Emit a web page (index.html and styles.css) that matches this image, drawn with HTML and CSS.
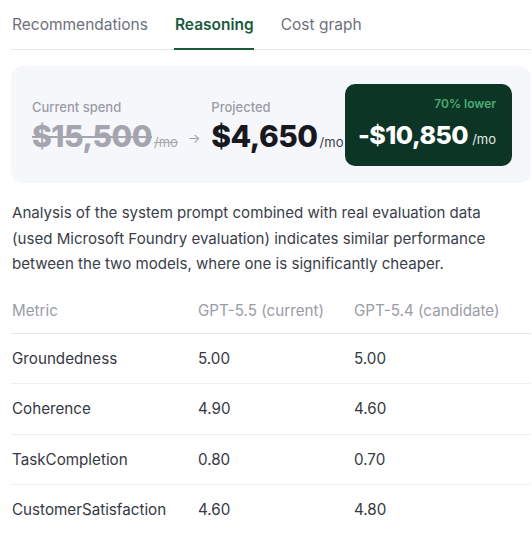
FILE: index.html
```html
<!DOCTYPE html>
<html lang="en">
<head>
<meta charset="utf-8">
<title>Reasoning</title>
<link rel="stylesheet" href="styles.css">
</head>
<body>
<div class="page">
  <nav class="tabs">
    <span class="tab">Recommendations</span>
    <span class="tab active">Reasoning</span>
    <span class="tab">Cost graph</span>
  </nav>

  <section class="summary">
    <div class="stat stat-current">
      <div class="stat-label">Current spend</div>
      <div class="stat-amount"><span class="num">$15,500</span><span class="unit">/mo</span></div>
    </div>
    <span class="arrow">→</span>
    <div class="stat">
      <div class="stat-label">Projected</div>
      <div class="stat-amount"><span class="num">$4,650</span><span class="unit">/mo</span></div>
    </div>
    <div class="savings">
      <div class="savings-pct">70% lower</div>
      <div class="savings-amount"><span class="num">-$10,850</span><span class="unit">/mo</span></div>
    </div>
  </section>

  <p class="analysis">Analysis of the system prompt combined with real evaluation data (used Microsoft Foundry evaluation) indicates similar performance between the two models, where one is significantly cheaper.</p>

  <table class="metrics">
    <thead>
      <tr><th class="c1">Metric</th><th class="c2">GPT-5.5 (current)</th><th>GPT-5.4 (candidate)</th></tr>
    </thead>
    <tbody>
      <tr><td>Groundedness</td><td>5.00</td><td>5.00</td></tr>
      <tr><td>Coherence</td><td>4.90</td><td>4.60</td></tr>
      <tr><td>TaskCompletion</td><td>0.80</td><td>0.70</td></tr>
      <tr><td>CustomerSatisfaction</td><td>4.60</td><td>4.80</td></tr>
    </tbody>
  </table>
</div>
</body>
</html>
```
FILE: styles.css
```css
* { box-sizing: border-box; }
html, body { margin: 0; padding: 0; background: #ffffff; }
body {
  font-family: Inter, "Noto Sans", "Liberation Sans", sans-serif;
  color: #2f333d;
}
.page {
  padding-left: 11px;
  width: 531px;
}

/* Tabs */
.tabs {
  display: flex;
  gap: 26px;
  border-bottom: 1px solid #e6e7ec;
}
.tab {
  font-size: 15.5px;
  line-height: 24px;
  padding: 13px 0 11px 1px;
  color: #6d717d;
  border-bottom: 2px solid transparent;
  margin-bottom: -1px;
}
.tab.active {
  color: #1a5a3d;
  font-weight: 600;
  border-bottom-color: #1a5a3d;
}

/* Summary card */
.summary {
  margin-top: 16px;
  background: #f6f7fb;
  border-radius: 12px;
  padding: 18px 19px 17px 21px;
  display: flex;
  align-items: center;
  height: 117px;
}
.stat {
  margin-top: 8px;
}
.stat-label {
  font-size: 13px;
  line-height: 18px;
  color: #9a9ca6;
  font-weight: 500;
  margin-bottom: 2px;
}
.stat-amount {
  display: flex;
  align-items: baseline;
  line-height: 36px;
  white-space: nowrap;
}
.stat-amount .num {
  font-size: 30px;
  font-weight: 800;
  letter-spacing: -0.5px;
  color: #18191f;
}
.stat-amount .unit {
  font-size: 13px;
  color: #3a3d46;
  margin-left: 2px;
}
.stat-current .num,
.stat-current .unit {
  color: #a4a5ae;
  text-decoration: line-through;
  text-decoration-thickness: 2px;
}
.stat-current .unit { text-decoration-thickness: 1px; }
.arrow {
  font-size: 13px;
  color: #9ea1ab;
  margin: 26px 11px 0 10px;
}
.savings {
  margin-left: auto;
  flex-shrink: 0;
  width: 167px;
  height: 82px;
  background: #0d3526;
  border-radius: 10px;
  padding: 12px 16px 16px 12px;
  text-align: right;
}
.savings-pct {
  font-size: 12px;
  line-height: 16px;
  font-weight: 600;
  color: #4daa76;
  margin-bottom: 7px;
}
.savings-amount {
  display: flex;
  justify-content: flex-end;
  align-items: baseline;
  line-height: 32px;
  color: #ffffff;
  white-space: nowrap;
}
.savings-amount .num {
  font-size: 25px;
  font-weight: 800;
  letter-spacing: -0.5px;
}
.savings-amount .unit {
  font-size: 13px;
  color: #e4ebe7;
  margin-left: 4px;
}

/* Paragraph */
.analysis {
  margin: 17px 0 0 1px;
  padding-right: 22px;
  font-size: 15.1px;
  line-height: 25.5px;
  color: #3a3e49;
}

/* Table */
.metrics {
  margin-top: 12px;
  width: 520px;
  border-collapse: collapse;
  font-size: 15.2px;
}
.metrics th {
  text-align: left;
  font-weight: 400;
  color: #9a9ca6;
  padding: 10px 0 10px 1px;
  line-height: 24px;
  border-bottom: 1px solid #e6e7ec;
}
.metrics th.c1 { width: 186px; }
.metrics th.c2 { width: 156px; }
.metrics td {
  padding: 13px 0 13px 1px;
  line-height: 23.5px;
  color: #353944;
  border-bottom: 1px solid #eeeff2;
}
.metrics tbody tr:last-child td { border-bottom: none; }
```
